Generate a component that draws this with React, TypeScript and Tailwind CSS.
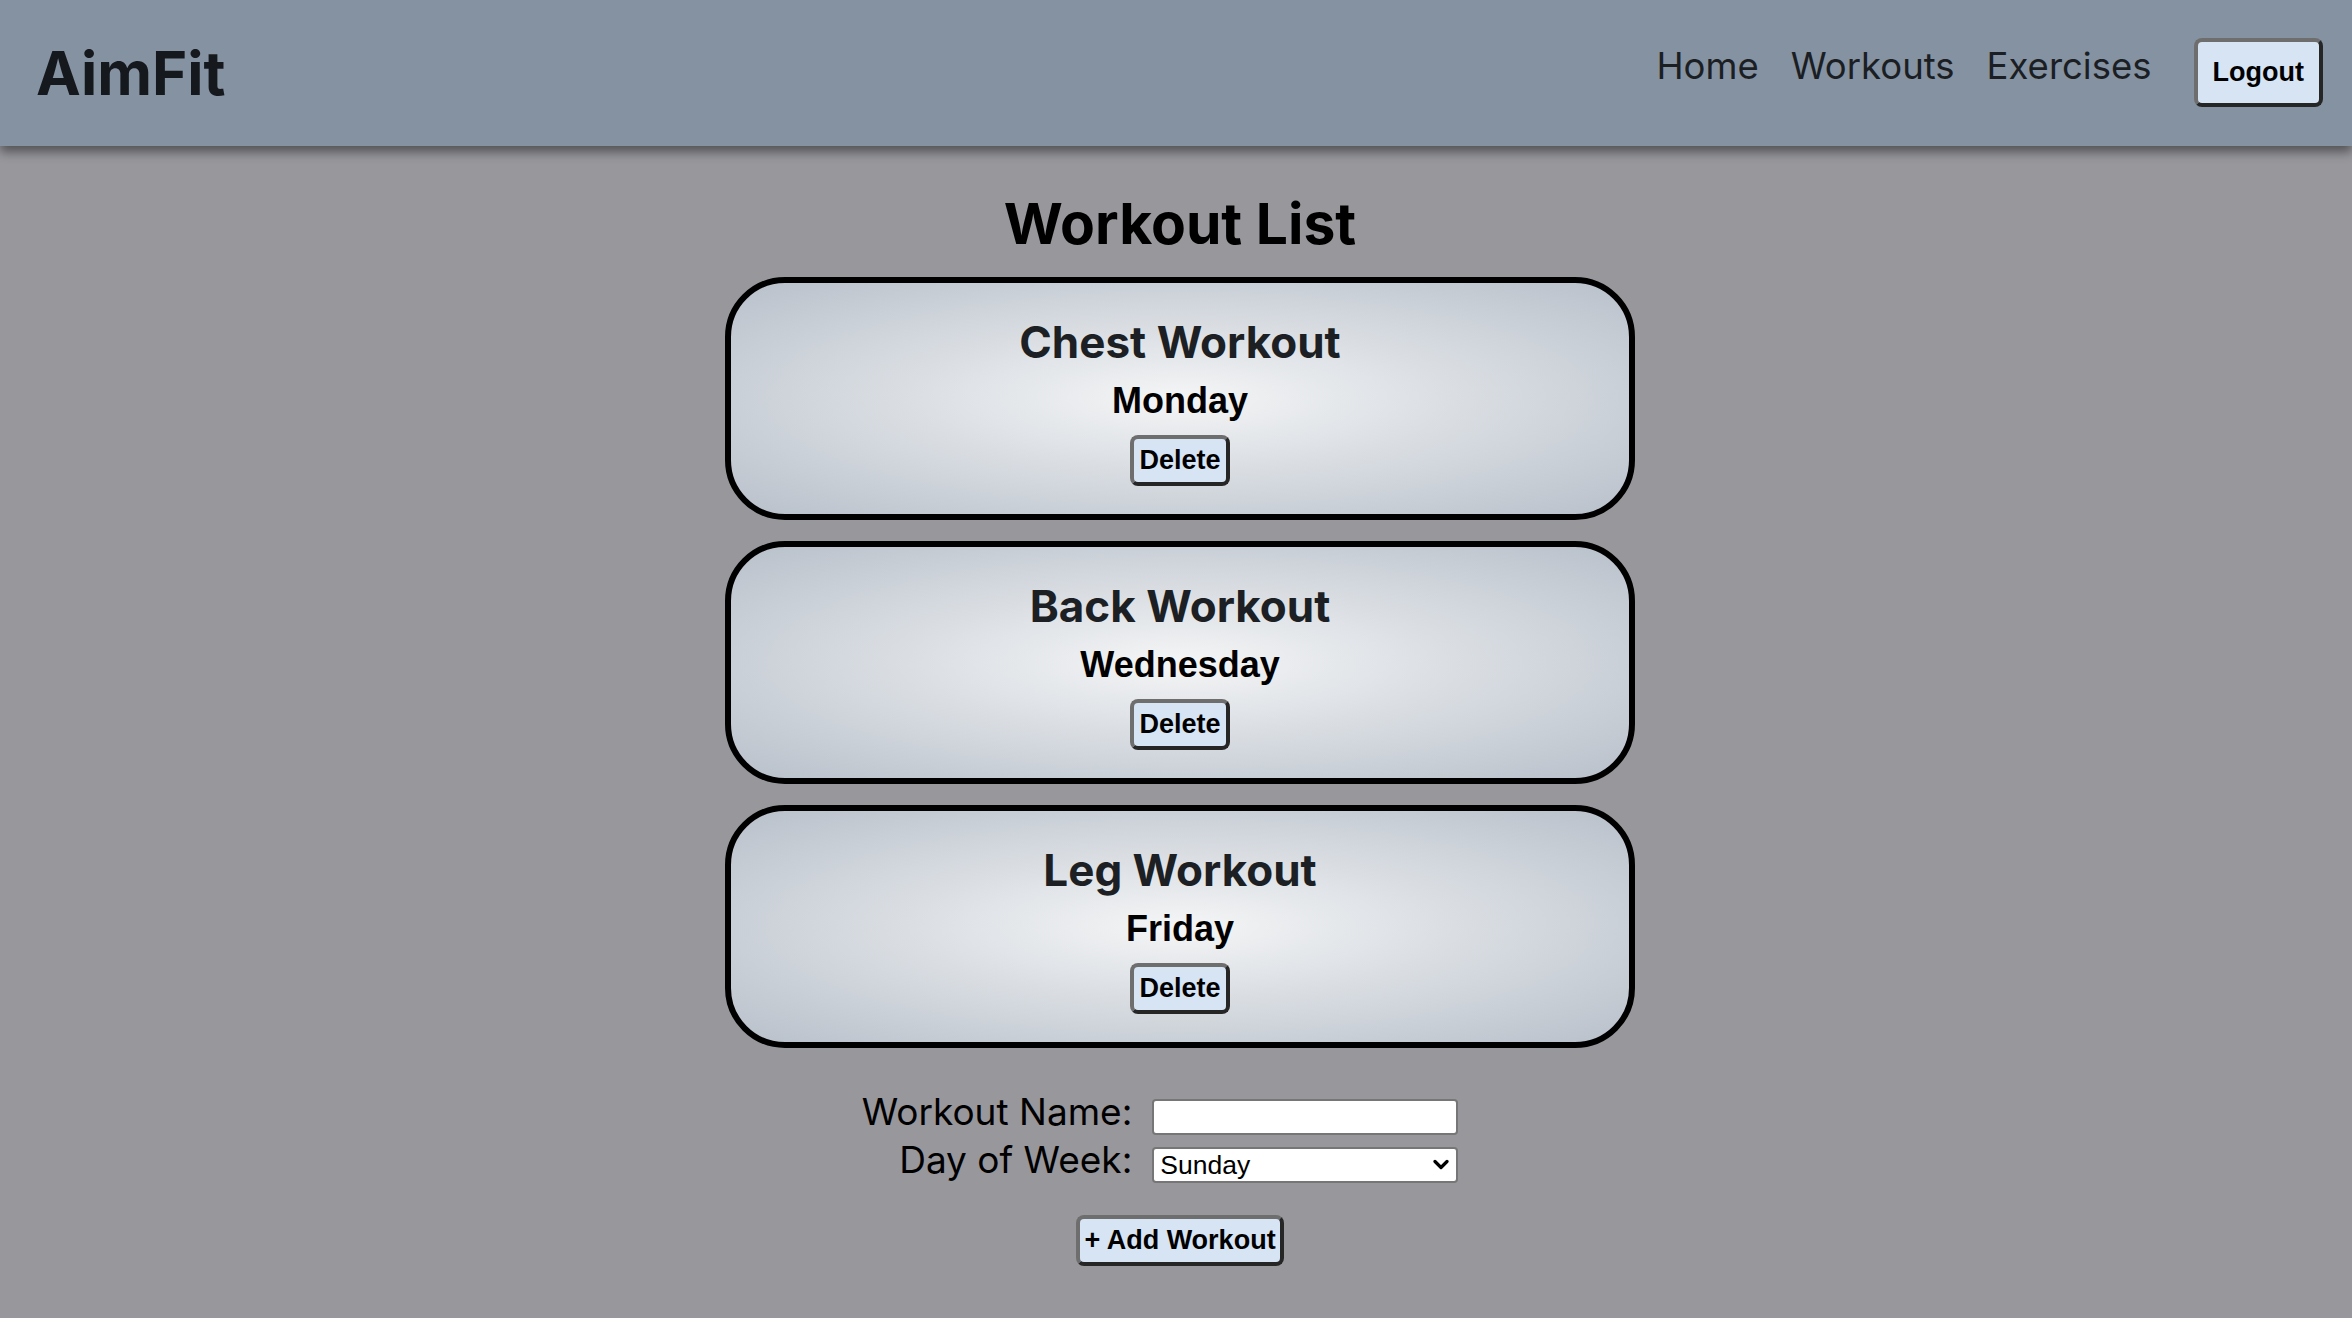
import { useState } from 'react';

interface Workout {
  id: number;
  name: string;
  day: string;
}

const initialWorkouts: Workout[] = [
  { id: 1, name: 'Chest Workout', day: 'Monday' },
  { id: 2, name: 'Back Workout', day: 'Wednesday' },
  { id: 3, name: 'Leg Workout', day: 'Friday' },
];

const days = ['Sunday', 'Monday', 'Tuesday', 'Wednesday', 'Thursday', 'Friday', 'Saturday'];

const inter = "font-['Inter','Noto_Sans',sans-serif]";
const arial = "font-['Liberation_Sans',Arial,sans-serif]";

const btn =
  "bg-[#d6e4f4] text-black font-bold text-[27px] leading-[31px] rounded-[8px] border-[4px] border-t-[#6e6e6e] border-l-[#6e6e6e] border-b-[#262626] border-r-[#262626] font-['Liberation_Sans',Arial,sans-serif]";

export default function App() {
  const [workouts, setWorkouts] = useState<Workout[]>(initialWorkouts);
  const [name, setName] = useState('');
  const [day, setDay] = useState('Sunday');

  const addWorkout = () => {
    if (!name.trim()) return;
    setWorkouts([...workouts, { id: Date.now(), name, day }]);
    setName('');
  };

  return (
    <div className="min-h-screen bg-[#98979c]">
      {/* Header */}
      <header className="h-[146px] bg-[#8592a2] flex items-center justify-between pl-[36px] pr-[29px] shadow-[0_6px_10px_rgba(0,0,0,0.45)] relative">
        <h1 className={`${inter} text-[60px] font-bold text-[#15191d] leading-[1.21]`}>AimFit</h1>
        <nav className="flex items-center">
          <div className={`${inter} flex items-center gap-[32px] text-[36.5px] text-[#1b1f24] mb-[13px]`}>
            <a href="#">Home</a>
            <a href="#">Workouts</a>
            <a href="#">Exercises</a>
          </div>
          <button className={`${btn} ml-[42px] px-[15px] py-[15px] -translate-y-[1px]`}>Logout</button>
        </nav>
      </header>

      {/* Content */}
      <main className="pl-[8px] flex flex-col items-center pb-[40px]">
        <h2 className={`${inter} text-[57px] font-bold text-black leading-[1.21] mt-[44px] mb-[18px]`}>
          Workout List
        </h2>

        <div className="flex flex-col gap-[21px]">
          {workouts.map((w) => (
            <div
              key={w.id}
              className="w-[910px] h-[243px] border-[6px] border-black rounded-[60px] bg-[radial-gradient(ellipse_at_center,#f4f5f6_0%,#b8c0ca_100%)] flex flex-col items-center pt-[33px]"
            >
              <h3 className={`${inter} text-[44px] font-bold text-[#1c1f23] leading-[1.21]`}>{w.name}</h3>
              <p className={`${arial} text-[36px] font-bold text-black leading-[41px] mt-[11px]`}>{w.day}</p>
              <button
                onClick={() => setWorkouts(workouts.filter((x) => x.id !== w.id))}
                className={`${btn} mt-[14px] px-[5px] py-[6px]`}
              >
                Delete
              </button>
            </div>
          ))}
        </div>

        {/* Form */}
        <div className="mt-[42px] pr-[40px]">
          <div className="grid grid-cols-[auto_306px] gap-x-[20px] gap-y-[3px] items-end">
            <label className={`${inter} text-[37px] text-black leading-[1.21] text-right`}>Workout Name:</label>
            <input
              type="text"
              value={name}
              onChange={(e) => setName(e.target.value)}
              className="h-[36px] bg-white border-2 border-[#767676] rounded-[4px] px-[6px] text-[24px] outline-none"
            />
            <label className={`${inter} text-[37px] text-black leading-[1.21] text-right`}>Day of Week:</label>
            <div className="relative h-[36px]">
              <select
                value={day}
                onChange={(e) => setDay(e.target.value)}
                className={`${arial} appearance-none w-full h-[36px] bg-white border-2 border-[#767676] rounded-[4px] pl-[6px] text-[26.5px] text-black leading-[30px] outline-none`}
              >
                {days.map((d) => (
                  <option key={d}>{d}</option>
                ))}
              </select>
              <svg
                className="absolute right-[9px] top-[12px] pointer-events-none"
                width="16"
                height="12"
                viewBox="0 0 16 12"
                fill="none"
              >
                <path d="M2 2.5 L8 8.5 L14 2.5" stroke="black" strokeWidth="3.2" strokeLinecap="round" strokeLinejoin="round" />
              </svg>
            </div>
          </div>
        </div>

        <button onClick={addWorkout} className={`${btn} mt-[32px] px-[4px] py-[6px]`}>
          + Add Workout
        </button>
      </main>
    </div>
  );
}
